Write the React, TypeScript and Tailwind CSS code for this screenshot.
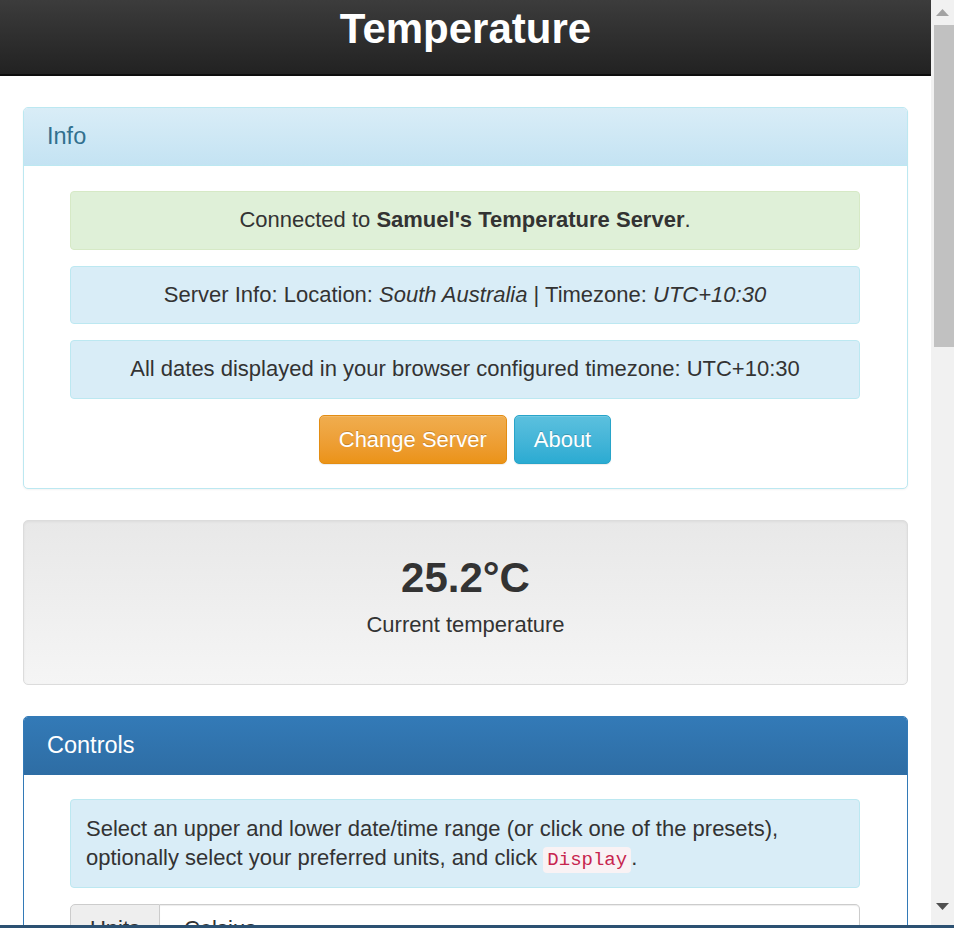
import React from 'react';

const Alert = ({ tone, children }: { tone: 'success' | 'info'; children: React.ReactNode }) => {
  return (
    <div
      className={`rounded-[4px] border px-[15px] py-[14px] text-center leading-[28.5px] ${
        tone === 'success' ? 'bg-[#dff0d8] border-[#d6e9c6]' : 'bg-[#d9edf7] border-[#bce8f1]'
      }`}
    >
      {children}
    </div>
  );
};

const Scrollbar = () => {
  return (
    <div className="w-[23px] shrink-0 bg-[#f1f1f1] flex flex-col items-center">
      <div className="h-[25px] w-full flex items-center justify-center">
        <svg width="13" height="7" viewBox="0 0 13 7">
          <polygon points="6.5,0 13,7 0,7" fill="#a3a3a3" />
        </svg>
      </div>
      <div className="w-[20px] ml-[2px] h-[322px] bg-[#c1c1c1]" />
      <div className="flex-1" />
      <div className="h-[25px] w-full flex items-start justify-center pt-[3px]">
        <svg width="13" height="7" viewBox="0 0 13 7">
          <polygon points="0,0 13,0 6.5,7" fill="#505050" />
        </svg>
      </div>
    </div>
  );
};

export default function App() {
  return (
    <div className="h-[928px] w-full flex flex-col overflow-hidden bg-white font-['Liberation_Sans',Arial,sans-serif] text-[22px] text-[#333]">
      <div className="flex flex-1 min-h-0">
        <div className="flex-1 min-w-0 overflow-hidden">
          <header className="h-[76px] bg-linear-to-b from-[#3c3c3c] to-[#222] border-b-2 border-[#0d0d0d] flex items-start justify-center">
            <h1 className="text-[42px] leading-[58px] font-bold text-white">Temperature</h1>
          </header>

          <main className="px-[23px] pt-[31px] flex flex-col gap-[31px]">
            {/* info */}
            <section className="rounded-[5px] border border-[#bce8f1] bg-white shadow-[0_1px_2px_rgba(0,0,0,0.05)] overflow-hidden">
              <div className="h-[58px] flex items-center px-[23px] bg-linear-to-b from-[#d9edf7] to-[#c4e3f3] border-b border-[#bce8f1] text-[#31708f] text-[23.5px]">
                Info
              </div>
              <div className="pl-[46px] pr-[47px] pt-[25px] pb-[24px] flex flex-col gap-[16px]">
                <Alert tone="success">
                  Connected to <b>Samuel's Temperature Server</b>.
                </Alert>
                <Alert tone="info">
                  Server Info: Location: <i>South Australia</i> | Timezone: <i>UTC+10:30</i>
                </Alert>
                <Alert tone="info">All dates displayed in your browser configured timezone: UTC+10:30</Alert>
                <div className="flex justify-center gap-[7px]">
                  <button className="h-[49px] px-[19px] rounded-[5px] border border-[#e38d13] bg-linear-to-b from-[#f0ad4e] to-[#eb9316] text-white [text-shadow:0_-1px_0_rgba(0,0,0,0.2)] shadow-[inset_0_1px_0_rgba(255,255,255,0.15),0_1px_1px_rgba(0,0,0,0.075)]">
                    Change Server
                  </button>
                  <button className="h-[49px] px-[19px] rounded-[5px] border border-[#28a4c9] bg-linear-to-b from-[#5bc0de] to-[#2aabd2] text-white [text-shadow:0_-1px_0_rgba(0,0,0,0.2)] shadow-[inset_0_1px_0_rgba(255,255,255,0.15),0_1px_1px_rgba(0,0,0,0.075)]">
                    About
                  </button>
                </div>
              </div>
            </section>

            {/* current reading */}
            <section className="h-[165px] rounded-[5px] border border-[#dcdcdc] bg-linear-to-b from-[#e8e8e8] to-[#f5f5f5] shadow-[inset_0_1px_3px_rgba(0,0,0,0.05),0_1px_0_rgba(255,255,255,0.1)] flex flex-col items-center pt-[31px]">
              <div className="text-[42px] leading-[52px] font-bold">25.2°C</div>
              <div className="mt-[6px] leading-[30px]">Current temperature</div>
            </section>

            {/* controls */}
            <section className="rounded-[5px] border border-[#337ab7] bg-white overflow-hidden">
              <div className="h-[58px] flex items-center px-[23px] bg-linear-to-b from-[#337ab7] to-[#2e6da4] text-white text-[23.5px]">
                Controls
              </div>
              <div className="pl-[46px] pr-[47px] pt-[24px] flex flex-col gap-[16px]">
                <div className="rounded-[4px] border border-[#bce8f1] bg-[#d9edf7] px-[15px] py-[14.5px] leading-[29px]">
                  Select an upper and lower date/time range (or click one of the presets), optionally select your
                  preferred units, and click{' '}
                  <code className="font-['Liberation_Mono',monospace] text-[19px] leading-[20px] text-[#c7254e] bg-[#f9f2f4] rounded-[4px] px-[4px] py-[2px]">
                    Display
                  </code>
                  .
                </div>
                <div className="flex h-[50px]">
                  <div className="w-[90px] flex items-center justify-center bg-[#eee] border border-[#ccc] rounded-l-[5px]">
                    Units
                  </div>
                  <div className="flex-1 flex items-center px-[24px] border border-l-0 border-[#ccc] rounded-r-[5px] shadow-[inset_0_1px_1px_rgba(0,0,0,0.075)]">
                    Celsius
                  </div>
                </div>
              </div>
            </section>
          </main>
        </div>
        <Scrollbar />
      </div>
      <div className="h-[3px] shrink-0 bg-[#2c5172]" />
    </div>
  );
}
